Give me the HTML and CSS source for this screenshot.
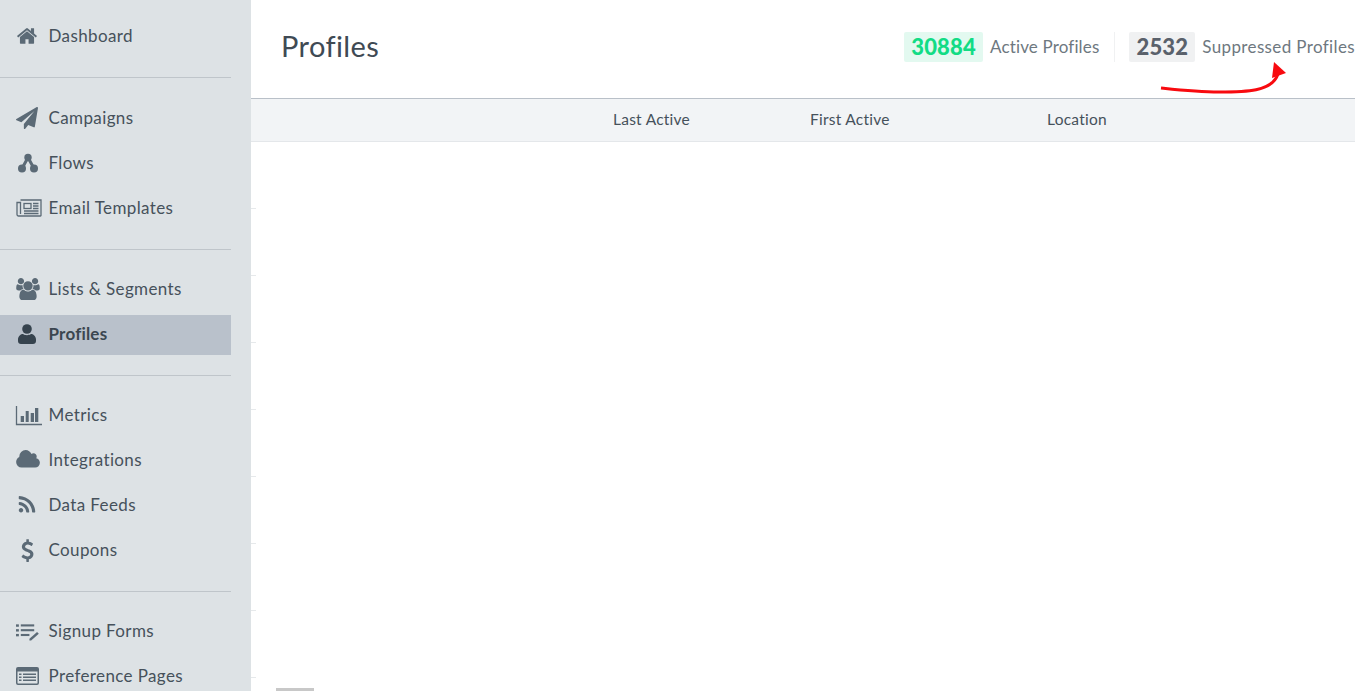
FILE: index.html
```html
<!DOCTYPE html>
<html lang="en">
<head>
<meta charset="utf-8">
<title>Profiles</title>
<link rel="stylesheet" href="styles.css">
</head>
<body>
<div class="app">
  <nav class="sidebar">
    <div class="group first">
      <a class="item"><span class="ico"><svg class="i-home" viewBox="0 0 1792 1792"><path d="M1472 992v480q0 26-19 45t-45 19h-384v-384h-256v384h-384q-26 0-45-19t-19-45v-480q0-1 .5-3t.5-3l575-474 575 474q1 2 1 6zm223-69l-62 74q-8 9-21 11h-3q-13 0-21-7l-692-577-692 577q-12 8-24 7-13-2-21-11l-62-74q-8-10-7-23.500t11-21.500l719-599q32-26 76-26t76 26l244 204v-195q0-14 9-23t23-9h192q14 0 23 9t9 23v408l219 182q10 8 11 21.500t-7 23.500z"/></svg></span>Dashboard</a>
    </div>
    <div class="group second">
      <a class="item"><span class="ico"><svg class="i-plane" viewBox="0 0 1792 1792"><path d="M1764 11q33 24 27 64l-256 1536q-5 29-32 45-14 8-31 8-11 0-24-5l-453-185-242 295q-18 23-49 23-13 0-22-4-19-7-30.500-23.500t-11.500-36.500v-349l864-1059-1069 925-395-162q-37-14-40-55-2-40 32-59l1664-960q15-9 32-9 20 0 36 11z"/></svg></span>Campaigns</a>
      <a class="item"><span class="ico"><svg class="i-flow" viewBox="0 0 20 20"><circle cx="10" cy="4.500" r="3.700"/><circle cx="4" cy="15.500" r="4"/><circle cx="16" cy="15.500" r="4"/><path class="ln" d="M10 4.500L4 15.500M10 4.500l6 11"/></svg></span>Flows</a>
      <a class="item"><span class="ico"><svg class="i-news" viewBox="0 0 26 18"><path class="ln" d="M4.500 1h20.500v15.500a.5.500 0 0 1-.5.500H2.500A1.500 1.500 0 0 1 1 15.500V3.500h3.500V15"/><rect class="ln" x="8" y="4.500" width="7" height="5"/><path class="ln" d="M17 4.500h5.500M17 7h5.500M17 9.500h5.500M8 12h14.500M8 14.500h14.500"/></svg></span>Email Templates</a>
    </div>
    <div class="group">
      <a class="item"><span class="ico"><svg class="i-users" viewBox="0 0 1920 1792"><path d="M593 896q-162 5-265 128h-134q-82 0-138-40.500t-56-118.500q0-353 124-353 6 0 43.500 21t97.500 42.500 119 21.500q67 0 133-23-5 37-5 66 0 139 81 256zm1071 637q0 120-73 189.500t-194 69.500h-874q-121 0-194-69.500t-73-189.500q0-53 3.500-103.500t14-109 26.500-108.500 43-97.500 62-81 85.500-53.500 111.500-20q10 0 43 21.500t73 48 107 48 135 21.500 135-21.500 107-48 73-48 43-21.500q61 0 111.500 20t85.500 53.500 62 81 43 97.500 26.500 108.500 14 109 3.500 103.500zm-1024-1277q0 106-75 181t-181 75-181-75-75-181 75-181 181-75 181 75 75 181zm704 384q0 159-112.500 271.500t-271.500 112.500-271.500-112.500-112.500-271.500 112.500-271.500 271.500-112.500 271.500 112.500 112.500 271.500zm576 225q0 78-56 118.500t-138 40.500h-134q-103-123-265-128 81-117 81-256 0-29-5-66 66 23 133 23 59 0 119-21.500t97.500-42.500 43.500-21q124 0 124 353zm-128-609q0 106-75 181t-181 75-181-75-75-181 75-181 181-75 181 75 75 181z"/></svg></span>Lists &amp; Segments</a>
      <a class="item active"><span class="ico"><svg class="i-user" viewBox="0 0 18 20"><circle cx="9" cy="5" r="4.800"/><path d="M0 15.500C0 12 3 10 5 10c1 .8 2.500 1.200 4 1.200s3-.4 4-1.200c2 0 5 2 5 5.500V17c0 1.800-1.200 3-3 3H3c-1.800 0-3-1.200-3-3z"/></svg></span>Profiles</a>
    </div>
    <div class="group">
      <a class="item"><span class="ico"><svg class="i-bars" viewBox="0 0 26 19"><path class="ln" d="M.500 0v18.500H26"/><rect x="4.700" y="10" width="3.300" height="6"/><rect x="9.700" y="5" width="3" height="11"/><rect x="14.700" y="7" width="3.300" height="9"/><rect x="19" y="2" width="3.300" height="14"/></svg></span>Metrics</a>
      <a class="item"><span class="ico"><svg class="i-cloud" viewBox="0 0 1920 1536"><path d="M1920 952q0 159-112.500 271.500t-271.500 112.500h-1088q-185 0-316.500-131.500t-131.500-316.500q0-132 71-241.500t187-163.500q-2-28-2-43 0-212 150-362t362-150q158 0 286.500 88t187.500 230q70-62 166-62 106 0 181 75t75 181q0 75-41 138 129 30 213 134.500t84 238.500z"/></svg></span>Integrations</a>
      <a class="item"><span class="ico"><svg class="i-rss" viewBox="128 128 1536 1536"><path d="M576 1344q0 80-56 136t-136 56-136-56-56-136 56-136 136-56 136 56 56 136zm512 123q2 28-17 48-18 21-47 21h-135q-25 0-43-16.500t-20-41.500q-22-229-184.500-391.500t-391.500-184.500q-25-2-41.500-20t-16.500-43v-135q0-29 21-47 17-17 43-17h5q160 13 306 80.500t259 181.500q114 113 181.500 259t80.500 306zm512 2q2 27-18 47-18 20-46 20h-143q-26 0-44.500-17.500t-19.500-42.500q-12-215-101-408.500t-231.500-336-336-231.500-408.500-102q-25-1-42.500-19.500t-17.500-43.500v-143q0-28 20-46 18-18 44-18h3q262 13 501.500 120t425.500 294q187 186 294 425.500t120 501.500z"/></svg></span>Data Feeds</a>
      <a class="item"><span class="ico"><svg class="i-usd" viewBox="0 0 1024 1792"><path d="M978 1185q0 153-99.500 263.500t-258.500 136.500v175q0 14-9 23t-23 9h-135q-13 0-22.500-9.500t-9.500-22.500v-175q-66-9-127.500-31t-101.500-44.500-74-48-46.500-37.500-17.500-18q-17-21-2-41l103-135q7-10 23-12 15-2 24 9l2 2q113 99 243 125 37 8 74 8 81 0 142.500-43t61.500-122q0-28-15-53t-33.500-42-58.500-37.500-66-32-80-32.500q-39-16-61.500-25t-61.500-26.500-62.500-31-56.500-35.500-53.500-42.500-43.500-49-35.500-58-21-66.500-8.500-78q0-138 98-242t255-134v-180q0-13 9.500-22.500t22.500-9.500h135q14 0 23 9t9 23v176q57 6 110.500 23t87 33.500 63.500 37.500 39 29 15 14q17 18 5 38l-81 146q-8 15-23 16-14 3-27-7-3-3-14.500-12t-39-26.500-58.500-32-74.500-26-85.500-11.500q-95 0-155 43t-60 111q0 26 8.500 48t29.500 41.500 39.500 33 56 31 60.500 27 70 27.500q53 20 81 31.500t76 35 75.500 42.500 62 50 53 63.500 31.500 76.500 13 94z"/></svg></span>Coupons</a>
    </div>
    <div class="group last">
      <a class="item"><span class="ico"><svg class="i-form" viewBox="0 0 24 17"><rect x="0" y="0" width="3" height="2.500"/><rect x="0" y="5" width="3" height="2.500"/><rect x="0" y="10" width="3" height="2.500"/><rect x="5" y="0" width="14" height="2.200"/><rect x="5" y="5" width="14" height="2.200"/><rect x="5" y="10" width="9" height="2.200"/><path d="M14 15l8-7 1.800 1.800-8 7H14z"/></svg></span>Signup Forms</a>
      <a class="item"><span class="ico"><svg class="i-page" viewBox="0 0 23 18"><path d="M2 0h19a2 2 0 0 1 2 2v14a2 2 0 0 1-2 2H2a2 2 0 0 1-2-2V2a2 2 0 0 1 2-2zm-.5 4.500V16c0 .3.200.5.500.500h19c.3 0 .5-.2.500-.5V4.500z"/><path d="M3 6.500h2.500v1.500H3zM7 6.500h13v1.500H7zM3 9.500h2.500V11H3zM7 9.500h13V11H7zM3 12.500h2.500V14H3zM7 12.500h13V14H7z"/></svg></span>Preference Pages</a>
    </div>
  </nav>
  <main class="main">
    <header class="top">
      <h1 class="title">Profiles</h1>
      <div class="stats">
        <div class="stat"><span class="num green">30884</span><span class="lbl lbl-active">Active Profiles</span></div>
        <div class="stat next"><span class="num grey">2532</span><span class="lbl lbl-supp">Suppressed Profiles</span></div>
      </div>
    </header>
    <svg class="arrow" viewBox="0 0 130 32" aria-hidden="true">
      <path class="shaft" d="M1 26C20 28 38 30 59 30C85 30 112 30 118 12"/>
      <path class="head" d="M114 0l12 11-14 5z"/>
    </svg>
    <div class="thead">
      <span class="col c1">Last Active</span>
      <span class="col c2">First Active</span>
      <span class="col c3">Location</span>
    </div>
    <div class="rows">
      <div class="row"><i class="tick"></i></div>
      <div class="row"><i class="tick"></i></div>
      <div class="row"><i class="tick"></i></div>
      <div class="row"><i class="tick"></i></div>
      <div class="row"><i class="tick"></i></div>
      <div class="row"><i class="tick"></i></div>
      <div class="row"><i class="tick"></i></div>
      <div class="row"><i class="tick"></i></div>
    </div>
    <div class="pager"></div>
  </main>
</div>
</body>
</html>
```
FILE: styles.css
```css
* { box-sizing: border-box; }
html, body { margin: 0; height: 100%; overflow: hidden; background: #fff; }
body { font-family: "Lato", "Open Sans", sans-serif; color: #46515b; }
.app { display: flex; height: 691px; overflow: hidden; }

.sidebar { width: 251px; flex: none; background: #dde2e5; padding-right: 20px; }
.group { display: flex; flex-direction: column; gap: 5px; padding: 20px 0; border-bottom: 1px solid #bfc5ca; }
.group.first { padding-top: 17px; }
.group.second { padding-top: 21px; }
.group.last { border-bottom: 0; }
.item { display: flex; align-items: center; height: 40px; padding: 0 0 4px 16px; font-size: 17px; letter-spacing: .38px; color: #46515b; flex: none; }
.item.active { background: #b9c1cb; font-weight: 700; letter-spacing: .2px; color: #3b4650; }
.ico { width: 32.500px; margin-top: 2px; flex: none; display: flex; align-items: center; justify-content: flex-start; }
.ico svg { display: block; fill: #5b6a76; overflow: visible; }
.ico .ln { fill: none; stroke: #5b6a76; stroke-width: 1.300; }
.active .ico svg { fill: #36434e; }
.i-home { width: 22px; height: 22px; }
.i-plane { width: 22px; height: 22px; }
.i-flow { width: 20px; height: 20px; margin-left: 2px; }
.i-flow .ln { stroke-width: 3; }
.i-news { width: 26px; height: 18px; }
.i-users { width: 24px; height: 22px; }
.i-user { width: 18px; height: 20px; margin-left: 2px; }
.i-bars { width: 26px; height: 19px; }
.i-cloud { width: 24px; height: 19px; }
.i-rss { width: 18px; height: 18px; margin-left: 2px; }
.i-usd { width: 13px; height: 23px; margin-left: 5px; }
.i-form { width: 23px; height: 17px; margin-top: 3px; }
.i-page { width: 23px; height: 18px; }

.main { position: relative; width: 1104px; flex: none; }
.top { height: 99px; border-bottom: 1px solid #b9c0c8; display: flex; justify-content: space-between; align-items: flex-start; padding-left: 30px; }
.title { margin: 28px 0 0; font-size: 29px; line-height: 36px; font-weight: 400; letter-spacing: .4px; color: #3f4a54; }
.stats { display: flex; margin-top: 32px; white-space: nowrap; }
.stat { display: flex; align-items: center; height: 30px; }
.stat.next { margin-left: 15px; padding-left: 14px; border-left: 1px solid #f0f1f2; }
.num { height: 30px; line-height: 30px; padding: 0 7px; margin-right: 7px; border-radius: 2px; font-size: 22px; font-weight: 900; letter-spacing: .2px; }
.green { background: #e3f9f0; color: #12dc85; }
.grey { background: #f0f1f2; color: #5a616b; }
.lbl { font-size: 17px; margin-bottom: 2px; color: #6e7880; }
.lbl-active { letter-spacing: .15px; }
.lbl-supp { letter-spacing: .37px; }

.arrow { position: absolute; left: 909px; top: 62px; width: 130px; height: 32px; overflow: visible; }
.shaft { fill: none; stroke: #f80a0f; stroke-width: 3; }
.head { fill: #f80a0f; }

.thead { height: 43px; background: #f2f4f6; border-bottom: 1px solid #e4e7ea; display: flex; align-items: center; padding: 0 0 3px 362px; font-size: 15.500px; letter-spacing: .25px; color: #46515b; }
.col { display: block; }
.c1 { width: 197px; }
.c2 { width: 237px; }

.row { height: 67px; display: flex; align-items: flex-end; }
.tick { display: block; width: 5px; height: 1px; background: #e6e9eb; }
.pager { width: 38px; height: 3px; margin: 10px 0 0 25px; background: #c8c8c8; }
```
